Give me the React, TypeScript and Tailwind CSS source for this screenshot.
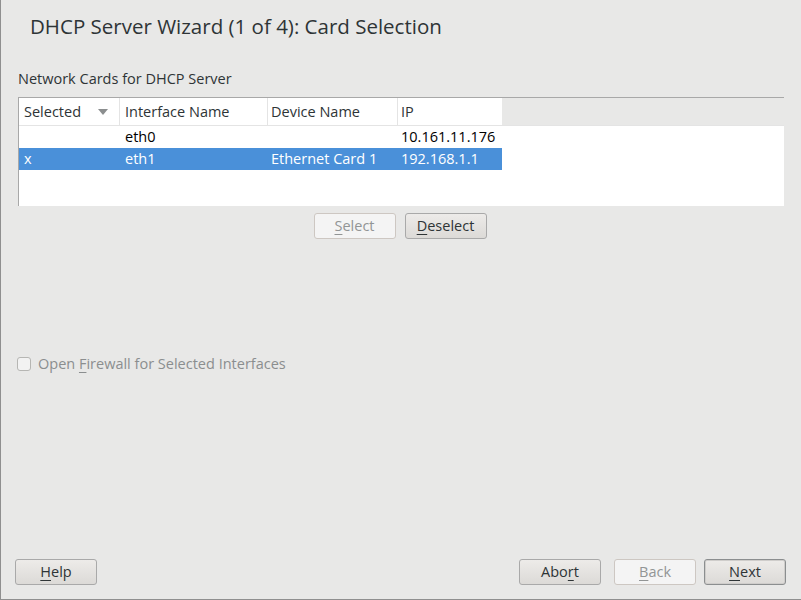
const font = { fontFamily: '"Open Sans", "DejaVu Sans", sans-serif' };

function U({ children }: { children: string }) {
  return <span className="underline underline-offset-[3px] decoration-1">{children}</span>;
}

function Btn({
  children,
  disabled,
  primary,
  className = "",
}: {
  children: React.ReactNode;
  disabled?: boolean;
  primary?: boolean;
  className?: string;
}) {
  const base =
    "flex h-[26px] w-[82px] items-center justify-center rounded-[3px] border text-[14.5px] leading-none";
  const look = disabled
    ? "border-[#cdc7c2] bg-[#f4f4f4] text-[#929595]"
    : primary
      ? "border-[#8b8e8f] bg-gradient-to-b from-[#edebe9] to-[#dcdad7] text-[#2e3436] shadow-[inset_0_0_0_1px_#cfcdcb]"
      : "border-[#a9a9a9] bg-gradient-to-b from-[#edebe9] to-[#dcdad7] text-[#2e3436]";
  return <div className={`${base} ${look} ${className}`}>{children}</div>;
}

const cols = ["w-[101px]", "w-[148px]", "w-[130px]", "w-[104px]"];

export default function App() {
  return (
    <div
      className="flex h-[600px] w-[801px] flex-col border-b border-l border-[#8f8f8f] bg-[#e8e8e7] text-[#2e3436]"
      style={font}
    >
      <h1 className="pl-[29px] pt-[12px] text-[20.5px] leading-[28px] text-[#2e3436]">
        DHCP Server Wizard (1 of 4): Card Selection
      </h1>

      <div className="mt-[30px] pl-[17px] text-[14.5px] leading-[18px]">Network Cards for DHCP Server</div>

      <div className="ml-[17px] mt-[9px] h-[109px] w-[766px] border-l border-t border-[#a8a8a8] bg-white">
        <div className="flex h-[28px] border-b border-[#e4e4e4] text-[14.5px]">
          <div className={`${cols[0]} flex items-center justify-between border-r border-[#e4e4e4] pl-[5px] pr-[11px]`}>
            <span>Selected</span>
            <svg width="10" height="6" viewBox="0 0 10 6">
              <path d="M0 0h10L5 6z" fill="#8b8e8f" />
            </svg>
          </div>
          <div className={`${cols[1]} flex items-center border-r border-[#e4e4e4] pl-[5px]`}>Interface Name</div>
          <div className={`${cols[2]} flex items-center border-r border-[#e4e4e4] pl-[3px]`}>Device Name</div>
          <div className={`${cols[3]} flex items-center pl-[3px]`}>IP</div>
          <div className="flex-1 bg-[#e8e8e7]" />
        </div>
        <div className="flex h-[22px] items-center text-[14.5px] text-black">
          <div className={`${cols[0]} pl-[5px]`} />
          <div className={`${cols[1]} pl-[5px]`}>eth0</div>
          <div className={`${cols[2]} pl-[3px]`} />
          <div className={`${cols[3]} pl-[3px]`}>10.161.11.176</div>
        </div>
        <div className="flex h-[22px] w-[483px] items-center bg-[#4a90d9] text-[14.5px] text-white">
          <div className={`${cols[0]} pl-[5px]`}>x</div>
          <div className={`${cols[1]} pl-[5px]`}>eth1</div>
          <div className={`${cols[2]} pl-[3px]`}>Ethernet Card 1</div>
          <div className={`${cols[3]} pl-[3px]`}>192.168.1.1</div>
        </div>
      </div>

      <div className="mt-[7px] flex justify-center gap-[9px] pr-[2px]">
        <Btn disabled>
          <U>S</U>elect
        </Btn>
        <Btn>
          <U>D</U>eselect
        </Btn>
      </div>

      <div className="mt-[114px] flex items-center gap-[7px] pl-[16px] text-[14.5px] text-[#8b8e8f]">
        <div className="h-[14px] w-[14px] rounded-[3px] border border-[#b6b6b3] bg-[#f2f2f2]" />
        <span>
          Open <U>F</U>irewall for Selected Interfaces
        </span>
      </div>

      <div className="mt-auto mb-[14px] flex items-center pl-[14px] pr-[15px]">
        <Btn>
          <U>H</U>elp
        </Btn>
        <div className="flex-1" />
        <Btn className="mr-[13px]">
          Abo<U>r</U>t
        </Btn>
        <Btn disabled className="mr-[8px]">
          <U>B</U>ack
        </Btn>
        <Btn primary>
          <U>N</U>ext
        </Btn>
      </div>
    </div>
  );
}
